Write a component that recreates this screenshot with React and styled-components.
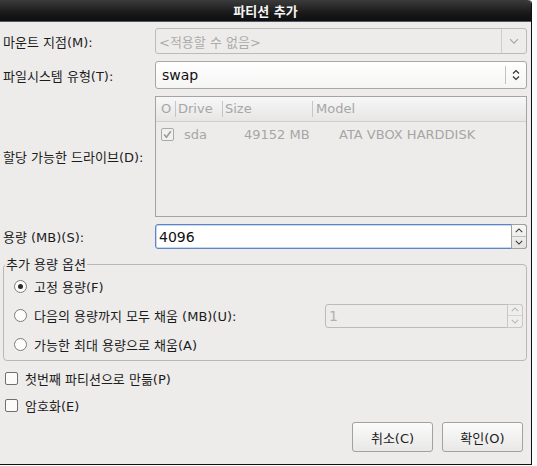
import styled, { createGlobalStyle } from 'styled-components'

const GlobalStyle = createGlobalStyle`
  html, body {
    margin: 0;
    padding: 0;
    background: #ffffff;
  }
  body {
    font-family: "DejaVu Sans", "Noto Sans CJK KR", sans-serif;
    font-size: 13px;
    color: #1c1c1c;
  }
`

const Window = styled.div`
  width: 532px;
  height: 465px;
  box-sizing: border-box;
  background: #edeceb;
  border-right: 1px solid #111;
  border-bottom: 1px solid #111;
  border-top-right-radius: 4px;
  display: flex;
  flex-direction: column;
`

const TitleBar = styled.div`
  height: 21px;
  flex: none;
  background: linear-gradient(#3b3b3b, #1a1a1a 60%, #0e0e0e);
  border-bottom: 1px solid #4b5a6b;
  border-top-right-radius: 4px;
  color: #f4f4f4;
  font-weight: bold;
  font-size: 13px;
  display: flex;
  align-items: center;
  justify-content: center;
`

const Body = styled.div`
  flex: 1;
  display: flex;
  flex-direction: column;
  padding: 6px 4px 0 3px;
`

const FormGrid = styled.div`
  display: grid;
  grid-template-columns: 152px 1fr;
  grid-template-rows: 26px 28px 121px 25px;
  row-gap: 7px;
  align-items: center;
`

const Label = styled.div`
  white-space: nowrap;
`

const Combo = styled.div`
  height: 100%;
  box-sizing: border-box;
  border: 1px solid ${p => (p.disabled ? '#bdbbb8' : '#a9a7a4')};
  border-radius: 3px;
  background: ${p => (p.disabled ? '#edeceb' : 'linear-gradient(#ffffff, #f5f5f4)')};
  display: flex;
  align-items: center;
`

const ComboText = styled.span`
  flex: 1;
  padding-left: ${p => (p.disabled ? 3 : 6)}px;
  color: ${p => (p.disabled ? '#ababab' : '#111')};
  font-size: ${p => (p.disabled ? 13 : 14)}px;
`

const ComboArrow = styled.div`
  width: ${p => p.w}px;
  height: ${p => (p.disabled ? '100%' : '18px')};
  border-left: 1px solid ${p => (p.disabled ? '#cfcdca' : '#c4c2bf')};
  display: flex;
  align-items: center;
  justify-content: center;
`

const TreeBox = styled.div`
  height: 100%;
  box-sizing: border-box;
  border: 1px solid #a4a4a4;
  background: #edeceb;
  color: #a6a6a6;
`

const TreeHeader = styled.div`
  height: 24px;
  display: flex;
  align-items: center;
  background: linear-gradient(#f7f7f7, #e7e6e5);
  border-bottom: 1px solid #cfcfcf;
`

const HeadCell = styled.div`
  width: ${p => p.w}px;
  flex: ${p => (p.w ? 'none' : 1)};
  height: 16px;
  line-height: 16px;
  box-sizing: border-box;
  padding-left: ${p => p.pl}px;
  border-left: ${p => (p.sep ? '1px solid #c6c6c6' : 'none')};
  font-size: 13px;
`

const TreeRow = styled.div`
  height: 24px;
  display: flex;
  align-items: center;
`

const RowCell = styled.div`
  width: ${p => p.w}px;
  flex: ${p => (p.w ? 'none' : 1)};
  display: flex;
  align-items: center;
  padding-left: ${p => p.pl || 0}px;
  box-sizing: border-box;
  font-size: 13px;
`

const Box = styled.div`
  width: 11px;
  height: 11px;
  border: 1px solid ${p => (p.disabled ? '#a9a9a9' : '#6f6f6f')};
  border-radius: 2px;
  background: ${p => (p.disabled ? '#f1f1f1' : '#fbfbfb')};
  display: flex;
  align-items: center;
  justify-content: center;
  flex: none;
`

const SpinField = styled.div`
  height: ${p => p.h}px;
  box-sizing: border-box;
  border: 1px solid ${p => (p.focus ? '#5b86c3' : '#bdbbb8')};
  border-radius: 3px;
  background: ${p => (p.disabled ? '#edeceb' : '#ffffff')};
  display: flex;
  align-items: stretch;
  box-shadow: ${p => (p.focus ? 'inset 0 0 0 0.5px #8fb0dc' : 'none')};
`

const SpinText = styled.span`
  flex: 1;
  display: flex;
  align-items: center;
  padding-left: ${p => p.pl}px;
  font-size: 14px;
  color: ${p => (p.disabled ? '#b0b0b0' : '#111')};
`

const SpinButtons = styled.div`
  width: 14px;
  display: flex;
  flex-direction: column;
  background: ${p => (p.disabled ? '#eeeeed' : 'linear-gradient(#f8f8f8, #e4e3e2)')};
  margin: -1px -1px -1px 0;
  border: 1px solid ${p => (p.disabled ? '#c9c7c4' : '#a2a09d')};
  border-radius: 0 3px 3px 0;
`

const SpinHalf = styled.div`
  flex: 1;
  display: flex;
  align-items: center;
  justify-content: center;
  border-top: ${p => (p.bottom ? `1px solid ${p.disabled ? '#d4d2cf' : '#c1bfbc'}` : 'none')};
`

const Group = styled.fieldset`
  margin: 8px 0 0 0;
  padding: 0 0 1px 0;
  border: 1px solid #bab8b5;
  border-radius: 4px;
  display: flex;
  flex-direction: column;
  min-width: 0;
`

const Legend = styled.legend`
  padding: 0 1px;
  margin-left: 1px;
  font-size: 13px;
  line-height: 15px;
`

const OptionRow = styled.div`
  height: 29px;
  display: flex;
  align-items: center;
  padding-left: 10px;
  gap: 7px;
`

const Radio = styled.div`
  width: 11px;
  height: 11px;
  border-radius: 50%;
  border: 1px solid #7c7c7c;
  background: #fdfdfd;
  display: flex;
  align-items: center;
  justify-content: center;
  flex: none;
  &::after {
    content: '';
    width: 5px;
    height: 5px;
    border-radius: 50%;
    background: ${p => (p.checked ? '#2b2b2b' : 'transparent')};
  }
`

const OptionText = styled.span`
  flex: 1;
`

const CheckRow = styled.label`
  height: 27px;
  display: flex;
  align-items: center;
  gap: 7px;
  padding-left: 2px;
  margin-top: ${p => p.mt || 0}px;
`

const ButtonBar = styled.div`
  display: flex;
  justify-content: flex-end;
  gap: 9px;
  padding: 3px 4px 0 0;
`

const Button = styled.button`
  width: 81px;
  height: 30px;
  border: 1px solid #a3a19e;
  border-radius: 3px;
  background: linear-gradient(#fbfbfb, #e9e8e7);
  font-family: inherit;
  font-size: 13px;
  color: #1c1c1c;
  padding: 0;
`

const Chevron = ({ dir = 'down', color = '#777', size = 9 }) => (
  <svg width={size} height={size / 1.6} viewBox="0 0 10 6">
    <path
      d={dir === 'down' ? 'M1 1 L5 5 L9 1' : 'M1 5 L5 1 L9 5'}
      fill="none"
      stroke={color}
      strokeWidth="1.3"
    />
  </svg>
)

const Tick = ({ color }) => (
  <svg width="9" height="9" viewBox="0 0 9 9">
    <path d="M1.2 4.6 L3.4 7.2 L7.8 1.2" fill="none" stroke={color} strokeWidth="1.6" />
  </svg>
)

const Spinner = ({ disabled }) => (
  <SpinButtons disabled={disabled}>
    <SpinHalf>
      <Chevron dir="up" color={disabled ? '#b5b5b5' : '#333'} size={8} />
    </SpinHalf>
    <SpinHalf bottom disabled={disabled}>
      <Chevron dir="down" color={disabled ? '#b5b5b5' : '#333'} size={8} />
    </SpinHalf>
  </SpinButtons>
)

const SmallSpin = styled(SpinField)`
  width: 198px;
  margin-right: 3px;
`

export default function App() {
  return (
    <>
      <GlobalStyle />
      <Window>
        <TitleBar>파티션 추가</TitleBar>
        <Body>
          <FormGrid>
            <Label>마운트 지점(M):</Label>
            <Combo disabled>
              <ComboText disabled>&lt;적용할 수 없음&gt;</ComboText>
              <ComboArrow disabled w={24}>
                <Chevron color="#a8a8a8" size={10} />
              </ComboArrow>
            </Combo>

            <Label>파일시스템 유형(T):</Label>
            <Combo>
              <ComboText>swap</ComboText>
              <ComboArrow w={20}>
                <svg width="8" height="12" viewBox="0 0 8 12">
                  <path d="M1 4.5 L4 1.5 L7 4.5 M1 7.5 L4 10.5 L7 7.5" fill="none" stroke="#333" strokeWidth="1.2" />
                </svg>
              </ComboArrow>
            </Combo>

            <Label>할당 가능한 드라이브(D):</Label>
            <TreeBox>
              <TreeHeader>
                <HeadCell w={19} pl={5}>O</HeadCell>
                <HeadCell w={47} pl={2} sep>Drive</HeadCell>
                <HeadCell w={90} pl={2} sep>Size</HeadCell>
                <HeadCell pl={3} sep>Model</HeadCell>
              </TreeHeader>
              <TreeRow>
                <RowCell w={28} pl={5}>
                  <Box disabled>
                    <Tick color="#9a9a9a" />
                  </Box>
                </RowCell>
                <RowCell w={60}>sda</RowCell>
                <RowCell w={95}>49152 MB</RowCell>
                <RowCell>ATA VBOX HARDDISK</RowCell>
              </TreeRow>
            </TreeBox>

            <Label>용량 (MB)(S):</Label>
            <SpinField focus h={25}>
              <SpinText pl={3}>4096</SpinText>
              <Spinner />
            </SpinField>
          </FormGrid>

          <Group>
            <Legend>추가 용량 옵션</Legend>
            <OptionRow>
              <Radio checked />
              <OptionText>고정 용량(F)</OptionText>
            </OptionRow>
            <OptionRow>
              <Radio />
              <OptionText>다음의 용량까지 모두 채움 (MB)(U):</OptionText>
              <SmallSpin disabled h={24}>
                <SpinText pl={3} disabled>1</SpinText>
                <Spinner disabled />
              </SmallSpin>
            </OptionRow>
            <OptionRow>
              <Radio />
              <OptionText>가능한 최대 용량으로 채움(A)</OptionText>
            </OptionRow>
          </Group>

          <CheckRow mt={4}>
            <Box />
            <span>첫번째 파티션으로 만듦(P)</span>
          </CheckRow>
          <CheckRow>
            <Box />
            <span>암호화(E)</span>
          </CheckRow>

          <ButtonBar>
            <Button>취소(C)</Button>
            <Button>확인(O)</Button>
          </ButtonBar>
        </Body>
      </Window>
    </>
  )
}
